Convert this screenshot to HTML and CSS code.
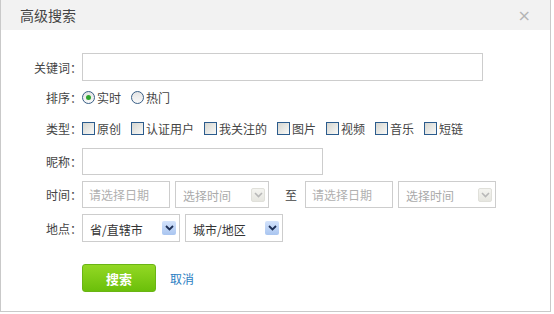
FILE: index.html
```html
<!DOCTYPE html>
<html lang="zh-CN">
<head>
    <meta charset="UTF-8">
    <title>高级搜索</title>
    <link rel="stylesheet" href="styles.css">
</head>
<body>
    <div class="dialog">
        <div class="dialog-head">
            <span class="dialog-title">高级搜索</span>
            <span class="close">×</span>
        </div>

        <form class="search-form" onsubmit="return false">
            <div class="row row-keyword">
                <label class="label">关键词：</label>
                <input type="text" class="text-input keyword">
            </div>

            <div class="row row-sort">
                <span class="label">排序：</span>
                <span class="option"><span class="radio checked"></span>实时</span>
                <span class="option"><span class="radio"></span>热门</span>
            </div>

            <div class="row row-type">
                <span class="label">类型：</span>
                <span class="option"><span class="check"></span>原创</span>
                <span class="option"><span class="check"></span>认证用户</span>
                <span class="option"><span class="check"></span>我关注的</span>
                <span class="option"><span class="check"></span>图片</span>
                <span class="option"><span class="check"></span>视频</span>
                <span class="option"><span class="check"></span>音乐</span>
                <span class="option"><span class="check"></span>短链</span>
            </div>

            <div class="row row-nick">
                <label class="label">昵称：</label>
                <input type="text" class="text-input nick">
            </div>

            <div class="row row-time">
                <span class="label">时间：</span>
                <input type="text" class="text-input date" placeholder="请选择日期">
                <div class="select time disabled">
                    <span class="select-text">选择时间</span>
                    <span class="arrow"><svg width="9" height="6" viewBox="0 0 9 6"><path d="M1 1 L4.5 4.5 L8 1" fill="none" stroke="#b8b8b8" stroke-width="1.6"/></svg></span>
                </div>
                <span class="to">至</span>
                <input type="text" class="text-input date" placeholder="请选择日期">
                <div class="select time2 disabled">
                    <span class="select-text">选择时间</span>
                    <span class="arrow"><svg width="9" height="6" viewBox="0 0 9 6"><path d="M1 1 L4.5 4.5 L8 1" fill="none" stroke="#b8b8b8" stroke-width="1.6"/></svg></span>
                </div>
            </div>

            <div class="row row-place">
                <span class="label">地点：</span>
                <div class="select province">
                    <span class="select-text">省/直辖市</span>
                    <span class="arrow"><svg width="9" height="6" viewBox="0 0 9 6"><path d="M1 1 L4.5 4.5 L8 1" fill="none" stroke="#1d2f55" stroke-width="1.8"/></svg></span>
                </div>
                <div class="select city">
                    <span class="select-text">城市/地区</span>
                    <span class="arrow"><svg width="9" height="6" viewBox="0 0 9 6"><path d="M1 1 L4.5 4.5 L8 1" fill="none" stroke="#1d2f55" stroke-width="1.8"/></svg></span>
                </div>
            </div>

            <div class="actions">
                <button type="submit" class="btn-search">搜索</button>
                <a href="#" class="cancel">取消</a>
            </div>
        </form>
    </div>
</body>
</html>
```

FILE: styles.css
```css
body {
    margin: 0;
    background: #fff;
    font-family: "Noto Sans CJK SC", "Liberation Sans", sans-serif;
    font-size: 12px;
    color: #444;
}

.dialog {
    width: 551px;
    height: 312px;
    box-sizing: border-box;
    border: 1px solid #c9c9c9;
    border-top: none;
    background: #fff;
}

.dialog-head {
    height: 30px;
    background: #f2f2f2;
    display: flex;
    align-items: center;
    justify-content: space-between;
    padding: 0 19px 0 19px;
}

.dialog-title {
    font-size: 14px;
    color: #444;
}

.close {
    font-family: "DejaVu Sans", sans-serif;
    font-size: 16px;
    color: #b5b5b5;
}

.search-form {
    padding-top: 23px;
}

.row {
    display: flex;
    align-items: center;
    margin-top: 6px;
}

.row-keyword {
    margin-top: 0;
    height: 28px;
}

.row-sort {
    margin-top: 4px;
    height: 24px;
}

.row-type {
    margin-top: 7px;
    height: 24px;
}

.row-nick {
    margin-top: 8px;
    height: 27px;
}

.row-time {
    height: 27px;
}

.row-place {
    height: 28px;
}

.label {
    width: 81px;
    text-align: right;
    color: #444;
    flex-shrink: 0;
}

.text-input {
    height: 100%;
    box-sizing: border-box;
    border: 1px solid #cdcdcd;
    padding: 0 6px;
    font-family: inherit;
    font-size: 12px;
    color: #333;
    outline: none;
    margin: 0;
}

.text-input::placeholder {
    color: #b0b0b0;
}

.keyword {
    width: 401px;
}

.nick {
    width: 241px;
}

.date {
    width: 88px;
}

.option {
    display: flex;
    align-items: center;
    margin-right: 10px;
    color: #444;
}

.radio {
    width: 11px;
    height: 11px;
    border: 1px solid #3a5f86;
    border-radius: 50%;
    background: linear-gradient(#e4e4e4, #fafafa);
    margin-right: 2px;
    display: flex;
    align-items: center;
    justify-content: center;
}

.radio.checked::after {
    content: "";
    width: 5px;
    height: 5px;
    border-radius: 50%;
    background: #2fa52f;
}

.check {
    width: 11px;
    height: 11px;
    border: 1px solid #2c5c8d;
    background: linear-gradient(135deg, #d6d6d0, #f9f9f7);
    margin-right: 2px;
}

.select {
    height: 100%;
    box-sizing: border-box;
    border: 1px solid #cdcdcd;
    display: flex;
    align-items: center;
    justify-content: space-between;
    padding: 0 3px 0 7px;
    margin-left: 5px;
    color: #333;
}

.select-text {
    padding-top: 2px;
}

.select.disabled {
    color: #aaa;
}

.time {
    width: 94px;
}

.time2 {
    width: 98px;
}

.province {
    width: 98px;
    margin-left: 0;
}

.city {
    width: 98px;
}

.arrow {
    width: 14px;
    height: 14px;
    box-sizing: border-box;
    display: flex;
    align-items: center;
    justify-content: center;
    border-radius: 2px;
    background: linear-gradient(#d4e3fb, #a9c5f0);
}

.disabled .arrow {
    background: linear-gradient(#f4f4f0, #e6e6e0);
    border: 1px solid #e0e0da;
}

.to {
    margin: 0 8px 0 16px;
    color: #444;
}

.actions {
    display: flex;
    align-items: center;
    margin-top: 22px;
    padding-left: 81px;
}

.btn-search {
    width: 74px;
    height: 28px;
    border: 1px solid #6ab514;
    border-radius: 3px;
    background: linear-gradient(#93d824, #6bbf0a);
    color: #fff;
    font-family: inherit;
    font-size: 13px;
    font-weight: bold;
    cursor: pointer;
    padding: 0;
}

.cancel {
    margin-left: 14px;
    color: #2a7ec2;
    text-decoration: none;
}
```
